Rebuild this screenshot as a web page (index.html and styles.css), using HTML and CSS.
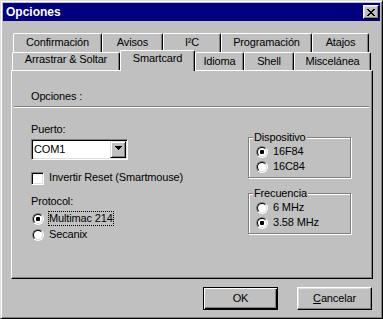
FILE: index.html
```html
<!DOCTYPE html>
<html lang="es">
<head>
<meta charset="utf-8">
<title>Opciones</title>
<link rel="stylesheet" href="styles.css">
</head>
<body>
<div class="window">
  <div class="titlebar">
    <span class="title">Opciones</span>
    <span class="close-btn">
      <svg width="8" height="7" viewBox="0 0 8 7" shape-rendering="crispEdges"><path fill="#000" d="M0 0h2v1H0zM6 0h2v1H6zM1 1h2v1H1zM5 1h2v1H5zM2 2h4v1H2zM3 3h2v1H3zM2 4h4v1H2zM1 5h2v1H1zM5 5h2v1H5zM0 6h2v1H0zM6 6h2v1H6z"/></svg>
    </span>
  </div>
  <div class="content">
    <div class="tabs">
      <div class="tab-row row-back">
        <div class="tab w-confirm">Confirmación</div>
        <div class="tab w-avisos">Avisos</div>
        <div class="tab w-i2c">I²C</div>
        <div class="tab w-prog">Programación</div>
        <div class="tab w-atajos">Atajos</div>
      </div>
      <div class="tab-row row-front">
        <div class="tab w-arrastrar tab-high">Arrastrar &amp; Soltar</div>
        <div class="tab w-smart active">Smartcard</div>
        <div class="tab w-idioma">Idioma</div>
        <div class="tab w-shell">Shell</div>
        <div class="tab w-misc">Miscelánea</div>
      </div>
    </div>
    <div class="panel">
      <div class="panel-title">Opciones :</div>
      <div class="sep"></div>
      <div class="panel-body">
        <div class="col-left">
          <div>Puerto:</div>
          <div class="combo">
            <span class="combo-value">COM1</span>
            <span class="combo-btn"><svg width="7" height="4" viewBox="0 0 7 4" shape-rendering="crispEdges"><path fill="#000" d="M0 0h7v1H0zM1 1h5v1H1zM2 2h3v1H2zM3 3h1v1H3z"/></svg></span>
          </div>
          <div class="check-row">
            <span class="checkbox"></span>
            <span class="check-label">Invertir Reset (Smartmouse)</span>
          </div>
          <div class="protocol-label">Protocol:</div>
          <div class="radio-row first">
            <span class="radio"><span class="radio-in"><span class="dot"></span></span></span>
            <span class="rlabel focus">Multimac 214</span>
          </div>
          <div class="radio-row">
            <span class="radio"><span class="radio-in"></span></span>
            <span class="rlabel">Secanix</span>
          </div>
        </div>
        <div class="col-right">
          <div class="group">
            <span class="group-label">Dispositivo</span>
            <div class="radio-row">
              <span class="radio"><span class="radio-in"><span class="dot"></span></span></span>
              <span class="rlabel">16F84</span>
            </div>
            <div class="radio-row">
              <span class="radio"><span class="radio-in"></span></span>
              <span class="rlabel">16C84</span>
            </div>
          </div>
          <div class="group">
            <span class="group-label">Frecuencia</span>
            <div class="radio-row">
              <span class="radio"><span class="radio-in"></span></span>
              <span class="rlabel">6 MHz</span>
            </div>
            <div class="radio-row">
              <span class="radio"><span class="radio-in"><span class="dot"></span></span></span>
              <span class="rlabel">3.58 MHz</span>
            </div>
          </div>
        </div>
      </div>
    </div>
    <div class="buttons">
      <span class="btn default">OK</span>
      <span class="btn"><u>C</u>ancelar</span>
    </div>
  </div>
</div>
</body>
</html>
```

FILE: styles.css
```css
* { box-sizing: border-box; }
html, body { margin: 0; padding: 0; }
body {
  background: #c0c0c0;
  font-family: "Liberation Sans", Arial, sans-serif;
  font-size: 11px;
  line-height: 13px;
  letter-spacing: -0.15px;
  color: #000;
}
.window {
  width: 383px;
  height: 319px;
  background: #c0c0c0;
  border: 1px solid;
  border-color: #dfdfdf #000 #000 #dfdfdf;
  box-shadow: inset 1px 1px #fff, inset -1px -1px #808080;
  padding: 2px;
}
.titlebar {
  height: 18px;
  background: #000080;
  display: flex;
  align-items: center;
  justify-content: space-between;
  padding: 0 1px 0 3px;
}
.title {
  color: #fff;
  font-weight: bold;
  font-size: 12px;
  line-height: 14px;
  letter-spacing: 0;
}
.close-btn {
  width: 16px;
  height: 14px;
  border: 1px solid;
  border-color: #fff #000 #000 #fff;
  box-shadow: inset -1px -1px #808080, inset 1px 1px #dfdfdf;
  background: #c0c0c0;
  display: flex;
  align-items: center;
  justify-content: center;
}
.close-btn svg { display: block; }
.content { padding: 12px 7px 0 8px; }
.tab-row { display: flex; }
.row-back { height: 19px; margin-left: 2px; }
.row-front { height: 18px; margin-left: 1px; align-items: flex-start; }
.tab {
  height: 100%;
  background: #c0c0c0;
  border-left: 1px solid #fff;
  border-top: 1px solid #fff;
  border-right: 1px solid #000;
  border-radius: 2px 2px 0 0;
  box-shadow: inset -1px 0 #808080;
  text-align: center;
  padding-top: 2px;
  white-space: nowrap;
}
.row-front .tab { height: 18px; }
.tab-high { padding-top: 0; }
.tab.active {
  height: 21px;
  margin-top: -2px;
  padding-top: 1px;
  position: relative;
  z-index: 1;
}
.w-confirm { width: 89px; }
.w-avisos { width: 61px; }
.w-i2c { width: 58px; }
.w-prog { width: 91px; }
.w-atajos { width: 57px; }
.w-arrastrar { width: 108px; }
.w-smart { width: 75px; }
.w-idioma { width: 49px; }
.w-shell { width: 50px; }
.w-misc { width: 77px; }
.panel {
  height: 209px;
  border: 1px solid;
  border-color: #fff #000 #000 #fff;
  box-shadow: inset -1px -1px #808080;
  padding-top: 19px;
}
.panel-title { margin-left: 19px; }
.sep {
  margin: 3px 3px 0 2px;
  height: 2px;
  border-top: 1px solid #808080;
  border-bottom: 1px solid #fff;
}
.panel-body {
  display: grid;
  grid-template-columns: 1fr 103px;
  padding: 15px 21px 0 19px;
}
.col-left { display: flex; flex-direction: column; align-items: flex-start; }
.combo {
  width: 97px;
  height: 21px;
  margin-top: 3px;
  display: flex;
  background: #fff;
  border: 1px solid;
  border-color: #808080 #fff #fff #808080;
  box-shadow: inset 1px 1px #000, inset -1px -1px #dfdfdf;
  padding: 1px;
}
.combo-value { flex: 1; padding: 2px 0 0 1px; }
.combo-btn {
  width: 16px;
  height: 17px;
  border: 1px solid;
  border-color: #dfdfdf #000 #000 #dfdfdf;
  box-shadow: inset 1px 1px #fff, inset -1px -1px #808080;
  background: #c0c0c0;
  display: flex;
  align-items: center;
  justify-content: center;
  padding-bottom: 3px;
}
.combo-btn svg { display: block; }
.check-row { display: flex; align-items: flex-start; margin-top: 12px; gap: 5px; }
.checkbox {
  width: 13px;
  height: 13px;
  background: #fff;
  border: 1px solid;
  border-color: #808080 #fff #fff #808080;
  box-shadow: inset 1px 1px #000, inset -1px -1px #dfdfdf;
}
.check-label { margin-top: -1px; }
.protocol-label { margin-top: 10px; }
.radio-row { display: flex; align-items: center; height: 15px; }
.col-left .radio-row { padding-left: 1px; margin-top: 1px; }
.col-left .radio-row.first { margin-top: 3px; }
.radio {
  width: 12px;
  height: 12px;
  border-radius: 50%;
  border: 1px solid;
  border-color: #808080 #fff #fff #808080;
  margin-right: 4px;
  flex: none;
}
.radio-in {
  display: flex;
  align-items: center;
  justify-content: center;
  width: 10px;
  height: 10px;
  border-radius: 50%;
  border: 1px solid;
  border-color: #000 #dfdfdf #dfdfdf #000;
  background: #fff;
}
.dot { width: 4px; height: 4px; border-radius: 1px; background: #000; }
.rlabel { border: 1px solid transparent; padding: 0; line-height: 13px; }
.rlabel.focus { border: 1px dotted #000; }
.group {
  position: relative;
  border: 1px solid #808080;
  box-shadow: inset 1px 1px #fff, 1px 1px #fff;
  padding: 6px 0 3px 7px;
  margin-top: 14px;
}
.group + .group { margin-top: 15px; }
.group-label {
  position: absolute;
  top: -7px;
  left: 4px;
  padding: 0 1px;
  background: #c0c0c0;
}
.buttons {
  display: flex;
  justify-content: flex-end;
  gap: 19px;
  margin-top: 8px;
  padding-right: 1px;
}
.btn {
  width: 75px;
  height: 23px;
  display: flex;
  align-items: center;
  justify-content: center;
  border: 1px solid;
  border-color: #fff #000 #000 #fff;
  box-shadow: inset -1px -1px #808080, inset 1px 1px #dfdfdf;
  background: #c0c0c0;
}
.btn.default {
  border-color: #000;
  box-shadow: inset 1px 1px #fff, inset -1px -1px #000, inset -2px -2px #808080;
}
```
